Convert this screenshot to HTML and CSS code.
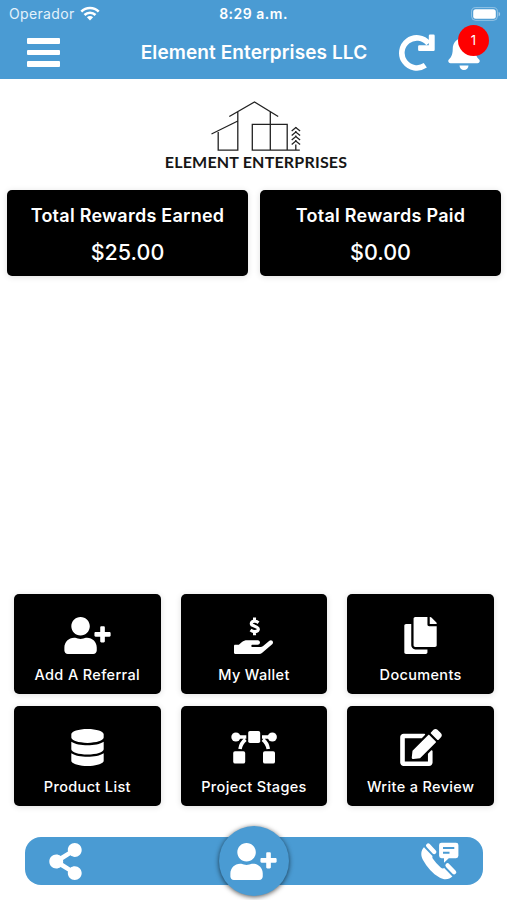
FILE: index.html
```
<!DOCTYPE html>
<html lang="en">
<head>
  <meta charset="UTF-8">
  <title>Element Enterprises LLC</title>
  <meta name="viewport" content="width=device-width, initial-scale=1.0">
  <link rel="stylesheet" href="styles.css">
</head>
<body>
  <!-- Shared icons -->
  <svg class="sprite" aria-hidden="true">
    <symbol id="user-plus" viewBox="0 0 640 512">
      <path d="M624 208h-64v-64c0-8.800-7.200-16-16-16h-32c-8.800 0-16 7.200-16 16v64h-64c-8.800 0-16 7.200-16 16v32c0 8.800 7.200 16 16 16h64v64c0 8.800 7.200 16 16 16h32c8.800 0 16-7.200 16-16v-64h64c8.800 0 16-7.200 16-16v-32c0-8.800-7.200-16-16-16zm-400 48c70.700 0 128-57.300 128-128S294.700 0 224 0 96 57.300 96 128s57.300 128 128 128zm89.600 32h-16.700c-22.200 10.200-46.900 16-72.900 16s-50.600-5.800-72.900-16h-16.700C60.200 288 0 348.200 0 422.400V464c0 26.500 21.500 48 48 48h352c26.500 0 48-21.500 48-48v-41.600c0-74.200-60.200-134.400-134.400-134.400z"/>
    </symbol>
  </svg>

  <header class="header">
    <div class="status">
      <div class="carrier">
        Operador
        <svg width="20" height="15" viewBox="0 0 20 15" fill="none" stroke="#fff" stroke-width="2.600">
          <path class="line" d="M1.300 5.600a12.400 12.400 0 0 1 17.400 0M4.500 9a7.800 7.800 0 0 1 11 0"/>
          <path d="M10 14.400 6.900 11.300a4.400 4.400 0 0 1 6.200 0z" fill="#fff" stroke="none"/>
        </svg>
      </div>
      <div class="time">8:29 a.m.</div>
      <svg class="battery" width="30" height="14" viewBox="0 0 30 14">
        <rect x=".6" y=".6" width="25.800" height="12.800" rx="4" fill="none" stroke="#fff" stroke-opacity=".4"/>
        <rect x="2.200" y="2.200" width="22.600" height="9.600" rx="2.500" fill="#fff"/>
        <path d="M27.600 4.700c2 .8 2 3.800 0 4.600z" fill="#fff" fill-opacity=".5"/>
      </svg>
    </div>
    <nav class="navbar">
      <div class="menu"><span></span><span></span><span></span></div>
      <h1>Element Enterprises LLC</h1>
      <div class="actions">
        <svg width="37" height="37" viewBox="0 0 37 37">
          <path d="M27.300 31.300A15 15 0 1 1 30.500 9.500" fill="none" stroke="#fff" stroke-width="5.600" stroke-linejoin="round"/>
          <path d="M32 .5h3.500q1.200 0 1.200 1.200v14q0 1.200-1.200 1.200H21.300q-1.200 0-1.200-1.200v-3.300q0-1.200 1.200-1.200h9.500V1.700Q30.800.5 32 .5z"/>
        </svg>
        <div class="bell">
          <svg width="32" height="36" viewBox="0 0 448 512">
            <path d="M224 512c35.320 0 63.970-28.650 63.970-64H160.030c0 35.350 28.650 64 63.970 64zm215.390-149.710c-19.320-20.760-55.470-51.990-55.470-154.290 0-77.700-54.480-139.900-127.940-155.160V32c0-17.670-14.320-32-31.980-32s-31.980 14.330-31.980 32v20.840C118.560 68.100 64.080 130.300 64.080 208c0 102.300-36.150 133.530-55.470 154.290-6 6.450-8.660 14.160-8.610 21.710.11 16.400 12.980 32 32.100 32h383.800c19.120 0 32-15.600 32.100-32 .05-7.550-2.610-15.270-8.610-21.710z"/>
          </svg>
          <span class="badge">1</span>
        </div>
      </div>
    </nav>
  </header>

  <main class="content">
    <div class="logo">
      <!-- House, frame and tree -->
      <svg width="90" height="51" viewBox="0 0 90 51" fill="none" stroke="#222" stroke-width="1.300">
        <path d="M18.300 15.500 43.500 1l23.700 14.500M.5 33l26.300-13M26.800 10.800v38.400H7.200V31M59.300 10.500v38.700M88.800 49.200H41.300V23.300h34.900v25.900M84.800 49.200V26"/>
        <path d="M80.700 30l4.100-3.500 4.300 3.500M80.700 34.500l4.100-3.500 4.300 3.500M80.700 39l4.100-3.500 4.300 3.500M80.700 43.500l4.100-3.500 4.300 3.500"/>
      </svg>
      <div class="logo-name">ELEMENT ENTERPRISES</div>
    </div>

    <section class="rewards">
      <div class="reward">
        <h2>Total Rewards Earned</h2>
        <p>$25.00</p>
      </div>
      <div class="reward">
        <h2>Total Rewards Paid</h2>
        <p>$0.00</p>
      </div>
    </section>

    <section class="tiles">
      <div class="tile">
        <svg width="47" height="37"><use href="#user-plus"/></svg>
        <span>Add A Referral</span>
      </div>
      <div class="tile">
        <svg width="39" height="37" viewBox="0 0 576 512" preserveAspectRatio="none">
          <path d="M565.300 328.100c-11.800-10.700-30.200-10-42.600 0L430.300 402c-11.300 9.100-25.400 14-40 14H272c-8.800 0-16-7.200-16-16s7.200-16 16-16h78.300c15.900 0 30.700-10.900 33.300-26.600 3.300-20-12.100-37.400-31.600-37.400H192c-27 0-53.100 9.300-74.100 26.300L71.400 384H16c-8.800 0-16 7.200-16 16v96c0 8.800 7.200 16 16 16h356.800c14.500 0 28.600-4.900 40-14L564 377c15.200-12.100 16.400-35.300 1.300-48.900z"/>
          <path d="M362 80c-20-16-38-23-58-23-50 0-65 44-29 58l60 25c42 20 26 64-28 64-25 0-44-9-63-24M303 6v50M303 203v50" fill="none" stroke="#fff" stroke-width="45"/>
        </svg>
        <span>My Wallet</span>
      </div>
      <div class="tile">
        <svg width="33" height="37" viewBox="0 0 448 512">
          <path d="M320 448v40c0 13.255-10.745 24-24 24H24c-13.255 0-24-10.745-24-24V120c0-13.255 10.745-24 24-24h72v296c0 30.879 25.121 56 56 56h168zm0-344V0H152c-13.255 0-24 10.745-24 24v368c0 13.255 10.745 24 24 24h272c13.255 0 24-10.745 24-24V128H344c-13.200 0-24-10.800-24-24zm120.971-31.029L375.029 7.029A24 24 0 0 0 358.059 0H352v96h96v-6.059a24 24 0 0 0-7.029-16.970z"/>
        </svg>
        <span>Documents</span>
      </div>
      <div class="tile">
        <svg width="33" height="37" viewBox="0 0 448 512">
          <path d="M448 73.143v45.714C448 159.143 347.667 192 224 192S0 159.143 0 118.857V73.143C0 32.857 100.333 0 224 0s224 32.857 224 73.143zM448 176v102.857C448 319.143 347.667 352 224 352S0 319.143 0 278.857V176c48.125 33.143 136.208 48.572 224 48.572S399.874 209.143 448 176zm0 160v102.857C448 479.143 347.667 512 224 512S0 479.143 0 438.857V336c48.125 33.143 136.208 48.572 224 48.572S399.874 369.143 448 336z"/>
        </svg>
        <span>Product List</span>
      </div>
      <div class="tile">
        <svg width="46" height="37" viewBox="0 0 46 37">
          <circle cx="4.900" cy="8" r="4.600"/>
          <circle cx="41.300" cy="8" r="4.600"/>
          <rect x="17.200" y="2" width="12" height="12" rx="1.800"/>
          <rect x="2.200" y="22.200" width="12" height="12.300" rx="1.800"/>
          <rect x="32" y="22.200" width="12" height="12.300" rx="1.800"/>
          <path d="M5 8h10.300M41 8H31M14.500 10.500Q10 14 9 20M31.800 10.500Q36.300 14 37.300 20" fill="none" stroke="#fff" stroke-width="3.600"/>
        </svg>
        <span>Project Stages</span>
      </div>
      <div class="tile">
        <svg width="42" height="37" viewBox="0 0 576 512">
          <path d="M402.600 83.200l90.200 90.200c3.800 3.800 3.800 10 0 13.800L274.400 405.600l-92.800 10.300c-12.400 1.400-22.900-9.100-21.500-21.500l10.300-92.800L388.800 83.200c3.800-3.800 10-3.800 13.800 0zm162-22.900l-48.800-48.800c-15.200-15.200-39.900-15.200-55.200 0l-35.400 35.400c-3.800 3.800-3.800 10 0 13.800l90.200 90.200c3.800 3.800 10 3.800 13.800 0l35.400-35.400c15.200-15.300 15.200-40 0-55.200zM384 346.200V448H64V128h229.800c3.200 0 6.200-1.300 8.500-3.500l40-40c7.600-7.600 2.200-20.500-8.500-20.500H48C21.500 64 0 85.500 0 112v352c0 26.500 21.500 48 48 48h352c26.500 0 48-21.500 48-48V306.200c0-10.700-12.900-16-20.500-8.500l-40 40c-2.200 2.300-3.500 5.300-3.500 8.500z"/>
        </svg>
        <span>Write a Review</span>
      </div>
    </section>
  </main>

  <footer class="tabbar">
    <svg width="33" height="37" viewBox="0 0 448 512">
      <path d="M352 320c-22.608 0-43.387 7.819-59.790 20.895l-102.486-64.054a96.551 96.551 0 0 0 0-41.683l102.486-64.054C308.613 184.181 329.392 192 352 192c53.019 0 96-42.981 96-96S405.019 0 352 0s-96 42.981-96 96c0 7.158.79 14.130 2.276 20.841L155.790 180.895C139.387 167.819 118.608 160 96 160c-53.019 0-96 42.981-96 96s42.981 96 96 96c22.608 0 43.387-7.819 59.790-20.895l102.486 64.054A96.301 96.301 0 0 0 256 416c0 53.019 42.981 96 96 96s96-42.981 96-96-42.981-96-96-96z"/>
    </svg>
    <div class="add">
      <svg width="47" height="37"><use href="#user-plus"/></svg>
    </div>
    <svg width="38" height="38" viewBox="0 0 38 38">
      <path d="M3.600 4.500C-.5 8.500-.5 13.500 2 18c4 7.500 9.500 13.500 16.500 17.500 5 3 10 2 13-1.200L23.700 25.500q-1.700 1.700-3.700.2-5-4.200-8.300-9.200-1-2 .6-3.400z"/>
      <path d="M6 3.300 13.700 11.300M25.900 23.800l7.600 7.700" fill="none" stroke="#4a9bd3" stroke-width="7" stroke-linecap="round"/>
      <path d="M7.200 3.600 13.200 9.900M26.600 23.400l6.500 6.800" fill="none" stroke="#fff" stroke-width="4.400" stroke-linecap="round"/>
      <path d="M20.500.7H35q2.400 0 2.400 2.400v10.700q0 2.400-2.400 2.400h-7.200L23 20.800v-4.600h-2.500q-2.400 0-2.400-2.400V3.100Q18.100.7 20.500.7z"/>
      <path d="M22 6h11.300M22 10.800h6.500" stroke="#4a9bd3" stroke-width="2"/>
    </svg>
  </footer>
</body>
</html>
```

FILE: styles.css
```
* {
  box-sizing: border-box;
}

body {
  margin: 0;
  height: 900px;
  display: flex;
  flex-direction: column;
  overflow: hidden;
  font-family: Inter, "Liberation Sans", sans-serif;
  color: #fff;
  background: #fff;
}

h1, h2, p {
  margin: 0;
}

svg {
  display: block;
  flex: none;
  fill: #fff;
}

.line {
  fill: none;
}

.carrier svg {
  fill: none;
}

.sprite {
  position: absolute;
  width: 0;
  height: 0;
}

/* Header */
.header {
  height: 79px;
  background: #4a9bd3;
}

.status {
  height: 27px;
  padding: 0 6px 0 9px;
  display: grid;
  grid-template-columns: 1fr auto 1fr;
  align-items: center;
  font-size: 14px;
  line-height: 27px;
}

.carrier {
  display: flex;
  align-items: center;
  gap: 5px;
  letter-spacing: 0.35px;
  color: #e4f2fb;
}

.time {
  margin-right: 3px;
  font-weight: 600;
  letter-spacing: 0.5px;
}

.battery {
  justify-self: end;
}

.navbar {
  height: 52px;
  padding: 0 27px 2px 27px;
  display: grid;
  grid-template-columns: 80px 1fr 82px;
  align-items: center;
}

.menu {
  width: 33px;
  padding-top: 1px;
  display: grid;
  gap: 6px;
}

.menu span {
  height: 5.5px;
  border-radius: 1px;
  background: #fff;
}

h1 {
  padding-left: 3px;
  text-align: center;
  font-size: 19px;
  font-weight: 600;
  letter-spacing: 0.1px;
  white-space: nowrap;
}

.actions {
  display: flex;
  justify-content: space-between;
}

.bell {
  position: relative;
}

.badge {
  position: absolute;
  top: -9px;
  right: -9px;
  width: 31px;
  height: 31px;
  border-radius: 50%;
  background: #fe0000;
  font-size: 13px;
  line-height: 31px;
  text-align: center;
}

/* Main content */
.content {
  flex: 1;
  display: flex;
  flex-direction: column;
}

.logo {
  height: 111px;
  padding-top: 22px;
  display: flex;
  flex-direction: column;
  align-items: center;
}

.logo svg {
  margin-left: 4px;
}

.logo-name {
  margin-left: 5px;
  font-family: Lato, sans-serif;
  font-size: 16px;
  font-weight: 700;
  line-height: 19px;
  letter-spacing: 0.2px;
  white-space: nowrap;
  color: #161616;
}

.rewards {
  padding: 0 6px 0 7px;
  display: grid;
  grid-template-columns: 1fr 1fr;
  gap: 12px;
}

.reward, .tile {
  border-radius: 5px;
  background: #000;
  box-shadow: 0 1px 6px rgba(0, 0, 0, 0.13);
  text-align: center;
}

.reward {
  height: 86px;
  padding-top: 13px;
}

.reward h2 {
  font-size: 18px;
  font-weight: 600;
  line-height: 26px;
  letter-spacing: 0.25px;
}

.reward p {
  margin-top: 8px;
  font-size: 21.500px;
  font-weight: 500;
  line-height: 30px;
}

.tiles {
  margin-top: auto;
  padding: 0 13px 31px 14px;
  display: grid;
  grid-template-columns: repeat(3, 1fr);
  gap: 12px 20px;
}

.tile {
  height: 100px;
  padding-top: 23px;
  display: flex;
  flex-direction: column;
  align-items: center;
  gap: 11px;
  font-size: 14.500px;
  font-weight: 500;
  line-height: 20px;
  letter-spacing: 0.35px;
  white-space: nowrap;
}

/* Bottom bar */
.tabbar {
  height: 48px;
  margin: 0 24px 15px 25px;
  padding: 0 24px;
  display: flex;
  align-items: center;
  justify-content: space-between;
  border-radius: 16px;
  background: #4a9bd3;
}

.add {
  width: 70px;
  height: 70px;
  margin-left: 4px;
  display: flex;
  align-items: center;
  justify-content: center;
  border-radius: 50%;
  background: #4a9bd3;
  box-shadow: 0 1px 5px rgba(0, 0, 0, 0.65);
}
```
